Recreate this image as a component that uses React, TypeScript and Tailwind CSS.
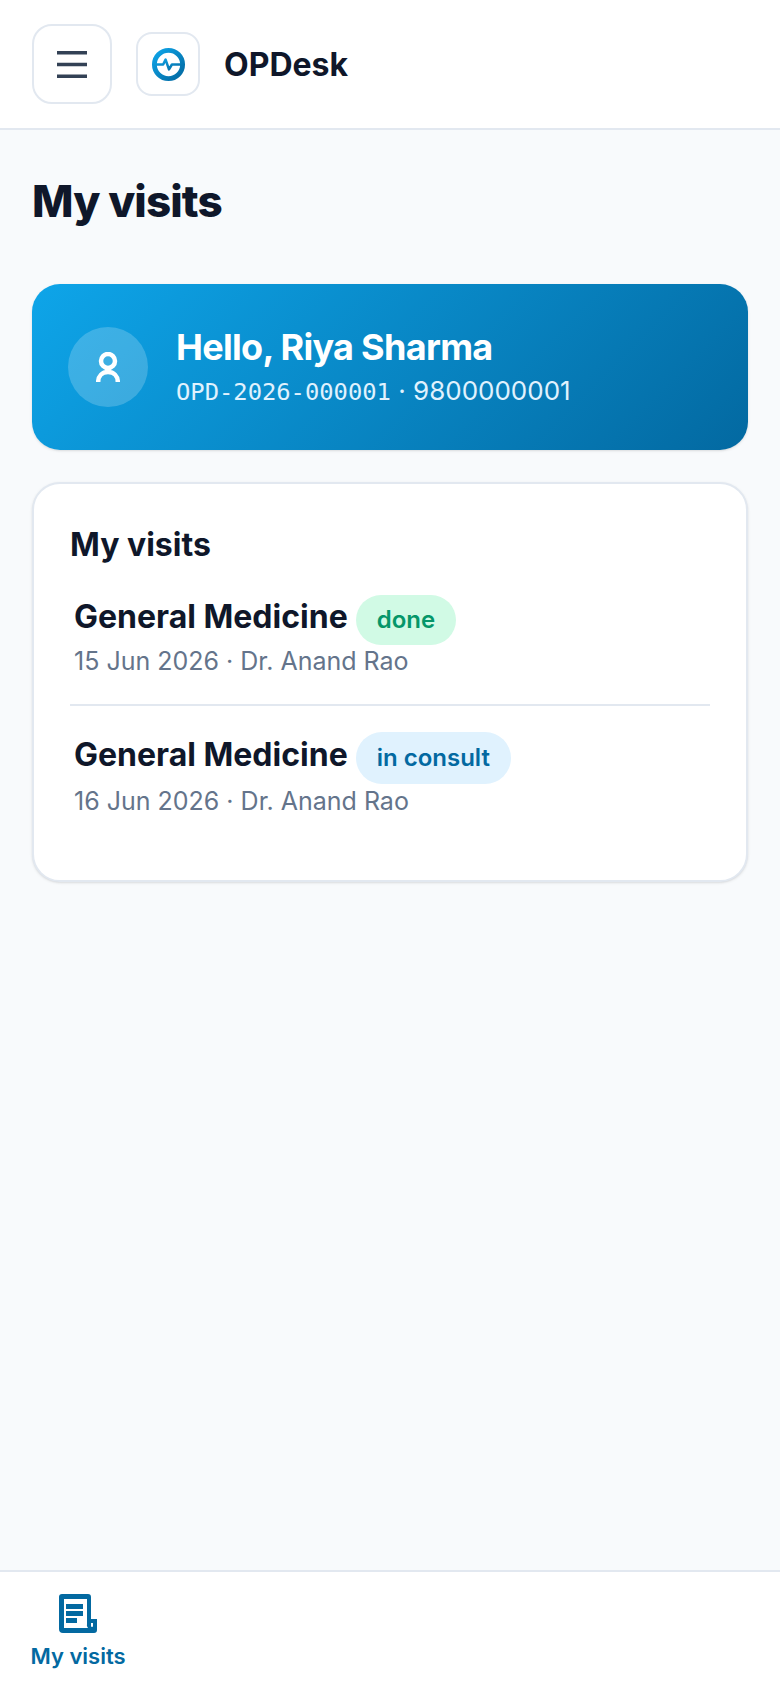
const inter = "font-['Inter',sans-serif]";

const VISITS = [
  {
    id: 1,
    dept: "General Medicine",
    status: "done",
    badge: "h-[50px] px-[21px] bg-[#d1fae5] text-[#059669]",
    meta: "15 Jun 2026 · Dr. Anand Rao",
    metaGap: "",
  },
  {
    id: 2,
    dept: "General Medicine",
    status: "in consult",
    badge: "h-[52px] px-[21px] bg-[#e0f2fe] text-[#0369a1]",
    meta: "16 Jun 2026 · Dr. Anand Rao",
    metaGap: "mt-[1px]",
  },
];

function PulseLogo() {
  return (
    <svg width="35" height="35" viewBox="0 0 36 36" fill="none">
      <defs>
        <linearGradient id="logoGrad" x1="0" y1="0" x2="1" y2="1">
          <stop offset="0" stopColor="#0ea5e9" />
          <stop offset="1" stopColor="#0369a1" />
        </linearGradient>
      </defs>
      <circle cx="18" cy="18" r="14.5" stroke="url(#logoGrad)" strokeWidth="5" />
      <path
        d="M4 18h8.500l2.500-5 3.500 10 3-5H32"
        stroke="url(#logoGrad)"
        strokeWidth="2.6"
        strokeLinejoin="round"
      />
    </svg>
  );
}

function PersonIcon() {
  return (
    <svg width="24" height="30" viewBox="0 0 24 30" fill="none" stroke="#fff" strokeWidth="4.5">
      <circle cx="12" cy="9" r="7" />
      <path d="M2.200 30c0-6 4-10 9.800-10s9.800 4 9.800 10" />
    </svg>
  );
}

function VisitsIcon() {
  return (
    <svg width="40" height="40" viewBox="0 0 40 40">
      <path
        fill="#0369a1"
        d="M4 0h26a3 3 0 0 1 3 3v22h6v11a3 3 0 0 1-3 3H5a4 4 0 0 1-4-4V3a3 3 0 0 1 3-3z"
      />
      <path fill="#fff" d="M6 5h23v25a4 4 0 0 0 1 4H6z" />
      <path fill="#fff" d="M33 29h2v3a1 1 0 0 1-2 0z" />
      <path fill="#0369a1" d="M8 10h17v5H8zM8 17h17v5H8zM8 24h11v5H8z" />
    </svg>
  );
}

export default function App() {
  return (
    <div className={`flex min-h-[1688px] flex-col bg-[#f8fafc] text-[#0f172a] ${inter}`}>
      <header className="flex h-[130px] items-center border-b-2 border-[#e2e8f0] bg-white pl-[32px]">
        <button
          type="button"
          aria-label="Menu"
          className="flex h-[80px] w-[80px] items-center justify-center rounded-[20px] border-2 border-[#e2e8f0]"
        >
          <svg width="30" height="27" viewBox="0 0 30 27" fill="#334155">
            <path d="M0 0h30v3.500H0zM0 11.750h30v3.500H0zM0 23.500h30V27H0z" />
          </svg>
        </button>
        <div className="ml-[24px] flex h-[64px] w-[64px] items-center justify-center rounded-[16px] border-2 border-[#e2e8f0]">
          <PulseLogo />
        </div>
        <span className="ml-[24px] pt-[1px] text-[32px] font-bold">OPDesk</span>
      </header>

      <main className="flex flex-1 flex-col px-[32px] pt-[35px]">
        <h1 className="text-[44px] leading-[72px] font-extrabold tracking-[-0.9px]">My visits</h1>

        <section className="mt-[47px] flex h-[166px] items-center gap-[28px] rounded-[28px] bg-[linear-gradient(135deg,#0ea5e9,#0369a1)] pl-[36px] text-white shadow-sm">
          <div className="mb-[1px] flex h-[80px] w-[80px] items-center justify-center rounded-full bg-white/20">
            <PersonIcon />
          </div>
          <div className="pb-[1px]">
            <div className="text-[36px] leading-[46px] font-bold tracking-[-0.7px]">Hello, Riya Sharma</div>
            <div className="mt-[3px] text-[26px] leading-[36px] text-[#e0f2fe]">
              <span className="font-['DejaVu_Sans_Mono',monospace] text-[23.8px]">OPD-2026-000001</span> · 9800000001
            </div>
          </div>
        </section>

        <section className="mt-[32px] h-[400px] rounded-[28px] border-2 border-[#e2e8f0] bg-white px-[36px] pt-[41px] shadow-sm">
          <h2 className="text-[32px] leading-[40px] font-bold">My visits</h2>
          <ul className="mt-[28px]">
            {VISITS.map((v, i) => (
              <li
                key={v.id}
                className={`px-[4px] ${i === 0 ? "border-b-2 border-[#e2e8f0] pb-[27px]" : "pt-[25px]"}`}
              >
                <div className="flex items-baseline gap-[8px]">
                  <span className="text-[32px] leading-[48px] font-bold">{v.dept}</span>
                  <span className={`flex items-center rounded-full text-[24px] font-semibold ${v.badge}`}>
                    {v.status}
                  </span>
                </div>
                <div className={`text-[25px] leading-[32px] text-[#64748b] ${v.metaGap}`}>{v.meta}</div>
              </li>
            ))}
          </ul>
        </section>
      </main>

      <nav className="flex h-[118px] border-t-2 border-[#e2e8f0] bg-white">
        <div className="flex w-[156px] flex-col items-center pt-[22px] text-[#0369a1]">
          <VisitsIcon />
          <span className="mt-[8px] text-[22px] leading-[28px] font-semibold">My visits</span>
        </div>
      </nav>
    </div>
  );
}
